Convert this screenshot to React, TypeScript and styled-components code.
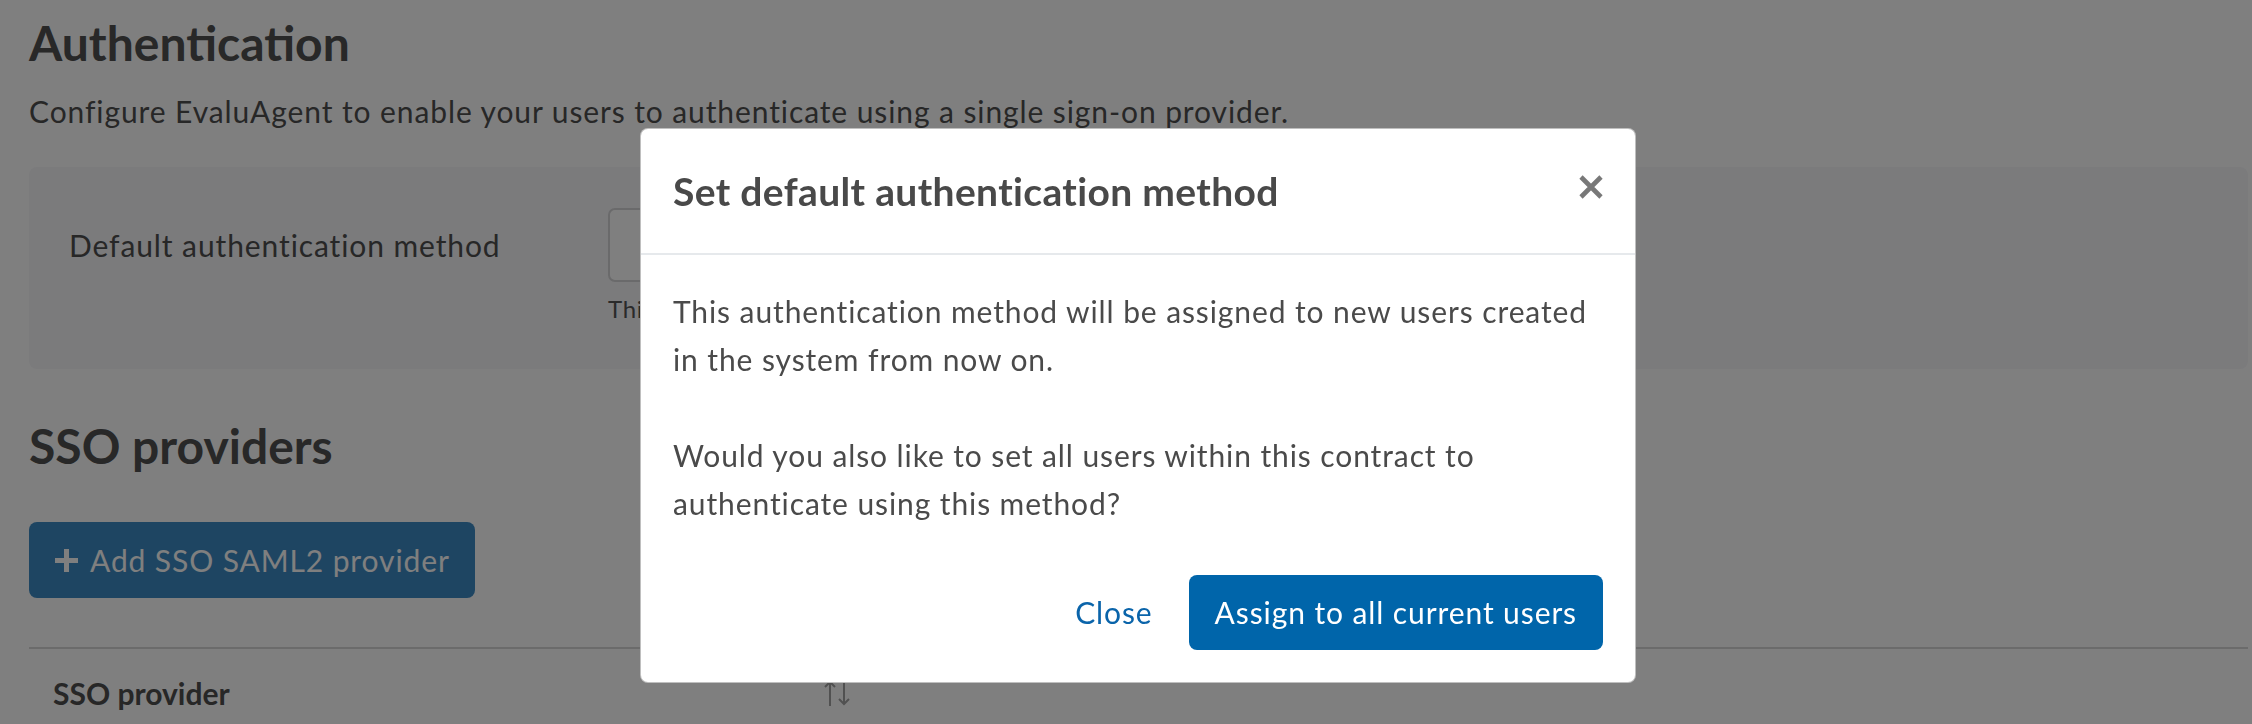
import React from "react";
import styled, { createGlobalStyle } from "styled-components";

const GlobalStyle = createGlobalStyle`
  html, body {
    margin: 0;
    padding: 0;
    background: #ffffff;
  }
  body {
    font-family: Lato, "Open Sans", "Liberation Sans", sans-serif;
    color: #4f4f4f;
    letter-spacing: 0.9px;
  }
  * { box-sizing: border-box; }
`;

const Page = styled.main`
  width: 2252px;
  height: 724px;
  overflow: hidden;
  padding: 14px 4px 0 29px;
`;

const PageTitle = styled.h1`
  margin: 0;
  font-size: 48px;
  line-height: 1.2;
  font-weight: 700;
  letter-spacing: 0;
  color: #505050;
`;

const Lead = styled.p`
  margin: 15px 0 32px;
  font-size: 30px;
  line-height: 48px;
`;

const SettingsPanel = styled.section`
  background: #f6f6f9;
  border-radius: 8px;
  padding: 41px 40px 42px;
  display: grid;
  grid-template-columns: 539px 1fr;
`;

const FieldLabel = styled.div`
  display: flex;
  align-items: center;
  height: 74px;
  font-size: 30px;
  line-height: 48px;
`;

const FieldColumn = styled.div`
  display: flex;
  flex-direction: column;
`;

const SelectBox = styled.div`
  width: 1000px;
  height: 74px;
  background: #ffffff;
  border: 2px solid #d4d4d6;
  border-radius: 7px;
`;

const HelpText = styled.div`
  margin-top: 9px;
  font-size: 24px;
  line-height: 36px;
  letter-spacing: 0.72px;
  color: #555;
`;

const SectionTitle = styled.h2`
  margin: 48px 0;
  font-size: 48px;
  line-height: 1.2;
  font-weight: 700;
  letter-spacing: 0;
  color: #505050;
`;

const AddButton = styled.button`
  display: inline-flex;
  align-items: center;
  gap: 11px;
  border: none;
  border-radius: 8px;
  background: #3c8ac4;
  color: #ffffff;
  font-family: inherit;
  font-size: 30px;
  letter-spacing: 0.9px;
  line-height: 46px;
  padding: 15px 25px;
  cursor: pointer;
`;

const Table = styled.div`
  margin-top: 49px;
  border-top: 2px solid #d6d6d6;
`;

const HeaderRow = styled.div`
  display: flex;
`;

const HeaderCell = styled.div<{ $width: number }>`
  width: ${(p) => p.$width}px;
  display: flex;
  align-items: center;
  justify-content: space-between;
  padding: 24px 24px 20px;
  font-size: 30px;
  line-height: 40px;
  font-weight: 700;
  letter-spacing: 0;
  color: #4f4f4f;
`;

const Overlay = styled.div`
  position: fixed;
  inset: 0;
  background: rgba(0, 0, 0, 0.5);
`;

const Dialog = styled.div`
  position: fixed;
  top: 128px;
  left: 640px;
  width: 996px;
  background: #ffffff;
  border: 1px solid rgba(0, 0, 0, 0.25);
  border-radius: 8px;
  color: #4a4a4a;
`;

const DialogHeader = styled.header`
  display: flex;
  align-items: center;
  justify-content: space-between;
  padding: 39px 32px 38px;
  border-bottom: 2px solid #e6e9ec;
`;

const DialogTitle = styled.h3`
  margin: 0;
  font-size: 39px;
  line-height: 1.2;
  font-weight: 700;
  letter-spacing: 0.35px;
  color: #494949;
`;

const CloseIcon = styled.button`
  display: flex;
  align-items: center;
  justify-content: center;
  width: 24px;
  height: 24px;
  padding: 0;
  margin-top: -8px;
  border: none;
  background: none;
  cursor: pointer;
`;

const DialogBody = styled.div`
  padding: 32px 32px 16px;
  font-size: 30px;
  line-height: 48px;
  & p {
    margin: 0;
  }
  & p + p {
    margin-top: 48px;
  }
`;

const DialogFooter = styled.footer`
  display: flex;
  justify-content: flex-end;
  align-items: center;
  gap: 36px;
  padding: 32px 32px 32px;
`;

const LinkButton = styled.button`
  border: none;
  background: none;
  padding: 0;
  font-family: inherit;
  font-size: 30px;
  letter-spacing: 0.9px;
  line-height: 45px;
  color: #0a64aa;
  cursor: pointer;
`;

const PrimaryButton = styled.button`
  border: none;
  border-radius: 8px;
  background: #0065aa;
  color: #ffffff;
  font-family: inherit;
  font-size: 30px;
  letter-spacing: 0.9px;
  line-height: 45px;
  padding: 15px 26px;
  cursor: pointer;
`;

const PlusIcon = () => (
  <svg width="25" height="25" viewBox="0 0 25 25" aria-hidden>
    <path d="M12.5 1v23M1 12.5h23" stroke="#ffffff" strokeWidth="5" />
  </svg>
);

const SortIcon = () => (
  <svg width="26" height="28" viewBox="0 0 26 28" aria-hidden>
    <g stroke="#a2a2a2" strokeWidth="2" fill="none">
      <path d="M6 27V3M1 8l5-5 5 5" />
      <path d="M20 1v24M15 20l5 5 5-5" />
    </g>
  </svg>
);

const XIcon = () => (
  <svg width="24" height="24" viewBox="0 0 24 24" aria-hidden>
    <path d="M2 2l20 20M22 2L2 22" stroke="#787878" strokeWidth="4.6" />
  </svg>
);

export default function App() {
  return (
    <>
      <GlobalStyle />
      <Page>
        <PageTitle>Authentication</PageTitle>
        <Lead>
          Configure EvaluAgent to enable your users to authenticate using a
          single sign-on provider.
        </Lead>
        <SettingsPanel>
          <FieldLabel>Default authentication method</FieldLabel>
          <FieldColumn>
            <SelectBox />
            <HelpText>This authentication method will be assigned to new users.</HelpText>
          </FieldColumn>
        </SettingsPanel>
        <SectionTitle>SSO providers</SectionTitle>
        <AddButton>
          <PlusIcon />
          Add SSO SAML2 provider
        </AddButton>
        <Table>
          <HeaderRow>
            <HeaderCell $width={845}>
              SSO provider
              <SortIcon />
            </HeaderCell>
          </HeaderRow>
        </Table>
      </Page>
      <Overlay />
      <Dialog role="dialog">
        <DialogHeader>
          <DialogTitle>Set default authentication method</DialogTitle>
          <CloseIcon aria-label="Close">
            <XIcon />
          </CloseIcon>
        </DialogHeader>
        <DialogBody>
          <p>
            This authentication method will be assigned to new users created
            <br />
            in the system from now on.
          </p>
          <p>
            Would you also like to set all users within this contract to
            <br />
            authenticate using this method?
          </p>
        </DialogBody>
        <DialogFooter>
          <LinkButton>Close</LinkButton>
          <PrimaryButton>Assign to all current users</PrimaryButton>
        </DialogFooter>
      </Dialog>
    </>
  );
}
